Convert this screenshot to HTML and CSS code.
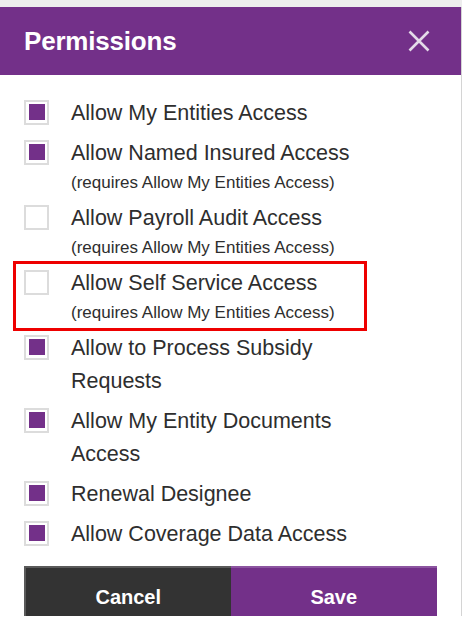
FILE: index.html
```html
<!DOCTYPE html>
<html lang="en">
<head>
<meta charset="utf-8">
<title>Permissions</title>
<link rel="stylesheet" href="styles.css">
</head>
<body>
<div class="top-strip"></div>
<div class="modal">
  <header class="modal-header">
    <h1 class="modal-title">Permissions</h1>
    <button class="close-btn" aria-label="Close">
      <svg width="22" height="22" viewBox="0 0 22 22"><path d="M1.5 1.5 L20.5 20.5 M20.5 1.5 L1.5 20.5" stroke="currentColor" stroke-width="2.6" stroke-linecap="butt" fill="none"/></svg>
    </button>
  </header>
  <ul class="perm-list">
    <li class="perm"><span class="cb checked"></span><div class="label"><div class="main">Allow My Entities Access</div></div></li>
    <li class="perm"><span class="cb checked"></span><div class="label"><div class="main">Allow Named Insured Access</div><div class="sub">(requires Allow My Entities Access)</div></div></li>
    <li class="perm"><span class="cb"></span><div class="label"><div class="main">Allow Payroll Audit Access</div><div class="sub">(requires Allow My Entities Access)</div></div></li>
    <li class="perm highlighted"><span class="cb"></span><div class="label"><div class="main">Allow Self Service Access</div><div class="sub">(requires Allow My Entities Access)</div></div></li>
    <li class="perm"><span class="cb checked"></span><div class="label"><div class="main">Allow to Process Subsidy Requests</div></div></li>
    <li class="perm"><span class="cb checked"></span><div class="label"><div class="main">Allow My Entity Documents Access</div></div></li>
    <li class="perm"><span class="cb checked"></span><div class="label"><div class="main">Renewal Designee</div></div></li>
    <li class="perm"><span class="cb checked"></span><div class="label"><div class="main">Allow Coverage Data Access</div></div></li>
  </ul>
  <div class="modal-footer">
    <button class="btn btn-cancel">Cancel</button>
    <button class="btn btn-save">Save</button>
  </div>
</div>
</body>
</html>
```
FILE: styles.css
```css
* { box-sizing: border-box; }
html, body { margin: 0; padding: 0; background: #ffffff; }
body { font-family: "Liberation Sans", Arial, sans-serif; color: #333333; }

.top-strip { height: 7px; width: 462px; background: #ededed; }

.modal {
  width: 462px;
  border-right: 1px solid #d4d4d4;
  background: #ffffff;
}

.modal-header {
  height: 68px;
  background: #733089;
  display: flex;
  align-items: center;
  justify-content: space-between;
  padding: 0 31px 0 24px;
}
.modal-title {
  margin: 0;
  font-size: 26px;
  font-weight: bold;
  color: #ffffff;
  letter-spacing: -0.2px;
}
.close-btn {
  background: none;
  border: 0;
  padding: 0;
  color: #e4dbe9;
  display: flex;
  cursor: pointer;
}

.perm-list {
  list-style: none;
  margin: 0;
  padding: 22px 0 0 24px;
  display: flex;
  flex-direction: column;
  gap: 7px;
}
.perm {
  display: flex;
  align-items: flex-start;
  gap: 22px;
  position: relative;
}
.cb {
  flex: none;
  width: 25px;
  height: 25px;
  margin-top: 2.5px;
  border: 2px solid #dcdcdc;
  padding: 2.5px;
  background: #fff;
}
.cb.checked::before {
  content: "";
  display: block;
  width: 100%;
  height: 100%;
  background: #733089;
}
.label { max-width: 300px; }
.main { font-size: 21.5px; line-height: 33px; color: #2e2e2e; }
.sub { font-size: 17px; line-height: 25px; color: #2e2e2e; }

.highlighted::after {
  content: "";
  position: absolute;
  left: -11px;
  top: -6px;
  bottom: -6px;
  width: 348px;
  border: 3px solid #ee0000;
  pointer-events: none;
}

.modal-footer {
  display: grid;
  grid-template-columns: 1fr 1fr;
  padding: 15px 24px 0 24px;
}
.btn {
  height: 50px;
  border: 0;
  font-family: "Liberation Sans", Arial, sans-serif;
  font-size: 20px;
  font-weight: bold;
  color: #ffffff;
  padding-top: 11px;
}
.btn-cancel { background: #333333; border-top: 2px solid #5a5a5a; border-left: 2px solid #5a5a5a; }
.btn-save { background: #733089; border-top: 2px solid #8c55a0; }
```
